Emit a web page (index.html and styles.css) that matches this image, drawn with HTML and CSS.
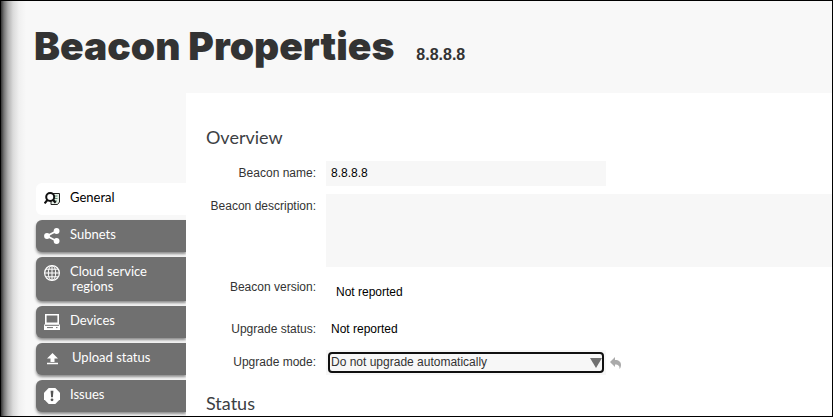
FILE: index.html
```html
<!DOCTYPE html>
<html lang="en">

<head>
    <meta charset="UTF-8" />
    <meta name="viewport" content="width=device-width, initial-scale=1.0" />
    <title>Beacon Properties</title>
    <link rel="stylesheet" href="styles.css">
</head>

<body>
    <div class="page">
        <header class="header">
            <h1>Beacon Properties</h1>
            <span class="address">8.8.8.8</span>
        </header>

        <div class="main">
            <nav class="tabs">
                <a class="tab active" href="#general">
                    <svg class="icon" viewBox="0 0 16 16">
                        <path d="M7 2.500h8.500V11l-2 2.500H7z" fill="#e8f0e8" stroke="#222" stroke-width="1" />
                        <path d="M10.500 5h3M10.500 7.500h3M10 10h3" stroke="#5c8c78" stroke-width="1" />
                        <circle cx="6.200" cy="6" r="4" fill="#fff" stroke="#111" stroke-width="2" />
                        <path d="M3.600 8.800L.6 12.400M9 8.800l2.600 3" stroke="#111" stroke-width="2.200" />
                    </svg>
                    <span>General</span>
                </a>
                <a class="tab" href="#subnets">
                    <svg class="icon" viewBox="0 0 16 16">
                        <path d="M13 2.8L3 8l10 5.2" fill="none" stroke="#fff" stroke-width="1.8" />
                        <circle cx="12.6" cy="3" r="2.9" fill="#fff" />
                        <circle cx="3" cy="8" r="2.9" fill="#fff" />
                        <circle cx="12.6" cy="13" r="2.9" fill="#fff" />
                    </svg>
                    <span>Subnets</span>
                </a>
                <a class="tab" href="#regions">
                    <svg class="icon" viewBox="0 0 16 16" fill="none" stroke="#fff">
                        <circle cx="8" cy="8" r="7.4" stroke-width="1.2" />
                        <ellipse cx="8" cy="8" rx="3.7" ry="7.4" />
                        <path d="M8 .6v14.8M.6 8h14.8M2 4.2h12M2 11.8h12" />
                    </svg>
                    <span>Cloud service<span class="second-line">regions</span></span>
                </a>
                <a class="tab" href="#devices">
                    <svg class="icon" viewBox="0 0 16 16">
                        <path d="M1.8.8h12.4v8.4H1.8z" fill="none" stroke="#fff" stroke-width="1.6" />
                        <path d="M1.5 9h13l1.5 2.3V16H0v-4.7z" fill="#fff" />
                        <path d="M1 11.3h14M3 13.6h6M12 13.6h1.5" stroke="#707070" stroke-width="1" />
                    </svg>
                    <span>Devices</span>
                </a>
                <a class="tab" href="#upload">
                    <svg class="icon" viewBox="0 0 16 16">
                        <path d="M8.5 2L14 7.5h-3.500V11h-4V7.500H3zM3 11.800h11v1.400H3z" fill="#fff" />
                    </svg>
                    <span class="second-line">Upload status</span>
                </a>
                <a class="tab" href="#issues">
                    <svg class="icon" viewBox="0 0 16 16">
                        <path d="M4.700 0h6.600L16 4.700v6.600L11.300 16H4.700L0 11.300V4.700z" fill="#fff" />
                        <path d="M6.600 2.800h2.800L8.900 9.300H7.100z" fill="#555" />
                        <circle cx="8" cy="11.800" r="1.400" fill="#555" />
                    </svg>
                    <span>Issues</span>
                </a>
            </nav>

            <main class="content">
                <h2>Overview</h2>
                <form class="properties">
                    <label for="name">Beacon name:</label>
                    <input type="text" id="name" value="8.8.8.8" />

                    <label for="description">Beacon description:</label>
                    <textarea id="description"></textarea>

                    <span class="label">Beacon version:</span>
                    <span class="value version">Not reported</span>

                    <span class="label">Upgrade status:</span>
                    <span class="value">Not reported</span>

                    <label for="mode">Upgrade mode:</label>
                    <div class="mode">
                        <div class="select-box">
                            <select id="mode">
                                <option>Do not upgrade automatically</option>
                            </select>
                            <svg class="arrow" viewBox="0 0 12 10">
                                <path d="M0 0h12L6 10z" fill="#707070" />
                            </svg>
                        </div>
                        <button type="reset" aria-label="Undo">
                            <svg viewBox="0 0 12 12">
                                <path d="M5 0v3c4 0 6 2 6 5 0 1.500-.5 3-1.500 4 .3-3-1-4.500-4.500-4.500V10L0 5z" fill="#aaa" />
                            </svg>
                        </button>
                    </div>
                </form>
                <h2>Status</h2>
            </main>
        </div>
    </div>
</body>

</html>
```
FILE: styles.css
```css
* {
    box-sizing: border-box;
}

body {
    margin: 0;
    font-family: "Liberation Sans", Arial, sans-serif;
    font-size: 12px;
    color: #333;
}

.page {
    display: flex;
    flex-direction: column;
    height: 100vh;
    overflow: hidden;
    border: 1px solid #000;
    background: linear-gradient(to right, #333 0, #777 3px, #b0b0b0 7px, #dadada 12px, #f0f0f0 18px, #f8f8f8 25px);
}

.header {
    display: flex;
    align-items: baseline;
    gap: 22px;
    flex: none;
    height: 92px;
    padding: 22px 33px 0;
}

h1 {
    margin: 0;
    font-family: "Arial Black", Inter, sans-serif;
    font-size: 39px;
    font-weight: 900;
    line-height: 46px;
}

.address {
    font-size: 16px;
    font-weight: bold;
}

.main {
    display: flex;
    flex: 1;
    min-height: 0;
}

.tabs {
    display: flex;
    flex-direction: column;
    gap: 5px;
    flex: none;
    width: 185px;
    padding: 90px 0 0 35px;
    overflow: hidden;
}

.tab {
    display: flex;
    align-items: flex-start;
    gap: 10px;
    flex: none;
    min-height: 32px;
    padding: 7px 8px;
    border-radius: 6px 0 0 6px;
    background: #707070;
    box-shadow: 0 2px 3px rgba(0, 0, 0, 0.45);
    color: #fff;
    font-family: Lato, sans-serif;
    font-size: 13px;
    line-height: 15px;
    text-decoration: none;
}

.tab.active {
    background: #fff;
    box-shadow: none;
    color: #000;
}

.icon {
    flex: none;
    width: 16px;
    height: 16px;
    margin-top: 1px;
}

.second-line {
    display: block;
    padding-left: 2px;
}

.content {
    flex: 1;
    min-width: 0;
    padding: 32px 0 0 20px;
    background: #fff;
}

h2 {
    margin: 0;
    font-family: Lato, sans-serif;
    font-size: 18px;
    font-weight: normal;
    line-height: 24px;
    color: #3c4043;
}

.properties {
    display: grid;
    grid-template-columns: 110px 1fr;
    gap: 8px 10px;
    padding: 12px 0 16px;
    line-height: 25px;
}

label,
.label {
    text-align: right;
}

.value {
    padding-left: 5px;
    color: #000;
}

.version {
    padding: 5px 10px 4px;
}

input,
textarea,
select {
    border: none;
    border-radius: 0;
    background: #f7f7f7;
    font: inherit;
    color: #000;
}

input {
    width: 280px;
    max-width: 100%;
    height: 25px;
    padding: 0 5px;
}

textarea {
    width: 100%;
    height: 73px;
    padding: 5px;
    resize: none;
}

.mode {
    display: flex;
    align-items: center;
    gap: 4px;
}

.select-box {
    position: relative;
    display: flex;
    width: 280px;
    height: 25px;
    padding: 2px;
    background: #f7f7f7;
}

select {
    appearance: none;
    width: 100%;
    padding: 0 20px 0 1px;
    border: 2px solid #101010;
    border-radius: 4px;
    line-height: 17px;
    color: #333;
}

.arrow {
    position: absolute;
    top: 8px;
    right: 4px;
    width: 12px;
    height: 10px;
    pointer-events: none;
}

button {
    display: flex;
    padding: 0;
    border: none;
    background: none;
    cursor: pointer;
}

button svg {
    width: 12px;
    height: 12px;
}
```
